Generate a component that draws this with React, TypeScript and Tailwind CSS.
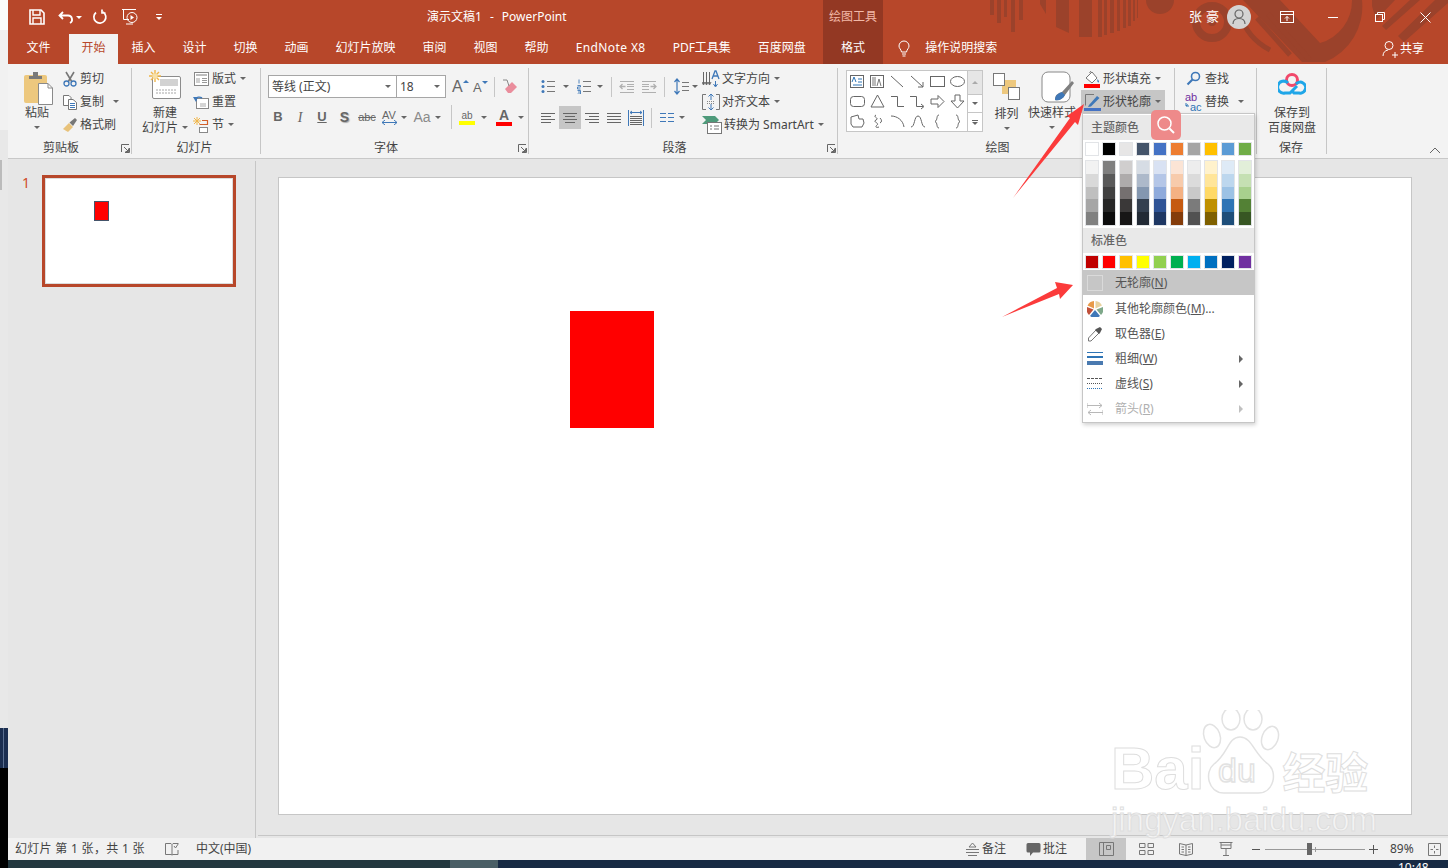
import type { ReactNode } from 'react'

const Caret = ({ className = '' }: { className?: string }) => (
  <span className={`inline-block h-0 w-0 border-x-[3px] border-t-[3px] border-x-transparent border-t-[#666] ${className}`} />
)

const Ico = ({ w = 16, h = 16, children, className = '' }: { w?: number; h?: number; children: ReactNode; className?: string }) => (
  <svg width={w} height={h} viewBox={`0 0 ${w} ${h}`} fill="none" className={`shrink-0 ${className}`}>
    {children}
  </svg>
)

const Launcher = () => (
  <svg width="9" height="9" viewBox="0 0 9 9" fill="none" className="absolute right-[2px] top-[6px]">
    <path d="M0.5 8V0.5H8M8.5 4V8.5H4M3 3L7.500 7.500M7.500 4.500V7.500H4.500" stroke="#666" strokeWidth="1" />
  </svg>
)

function Group({ label, className, labelPad = '', launcher, children }: { label: string; className: string; labelPad?: string; launcher?: boolean; children: ReactNode }) {
  return (
    <div className={`relative flex h-[92px] shrink-0 flex-col pt-[3px] ${className}`}>
      <div className="flex h-[71px]">{children}</div>
      <div className={`relative h-[18px] text-center leading-[19px] ${labelPad}`}>
        {label}
        {launcher && <Launcher />}
      </div>
      <div className="absolute right-0 top-[4px] h-[86px] w-px bg-[#c6c6c6]" />
    </div>
  )
}

function SmallRow({ icon, label, caret, caretGap = 'ml-[4px]', className = '' }: { icon: ReactNode; label: string; caret?: boolean; caretGap?: string; className?: string }) {
  return (
    <div className={`flex h-[23px] items-center whitespace-nowrap ${className}`}>
      {icon}
      <span>{label}</span>
      {caret && <Caret className={caretGap} />}
    </div>
  )
}

const Sep = ({ className = '' }: { className?: string }) => <div className={`w-px shrink-0 bg-[#c6c6c6] ${className}`} />

/* ---------- ribbon icons ---------- */
const PasteIcon = () => (
  <Ico w={30} h={34}>
    <rect x="0" y="4" width="23" height="28" rx="2" fill="#edc87e" />
    <path d="M5 5H18V8H5ZM9 1H14V5H9Z" fill="#7a7a7a" />
    <path d="M14.500 12.500H24L28.500 17V33.500H14.500Z" fill="#fff" stroke="#8a8a8a" />
    <path d="M24 12.500V17H28.500" stroke="#8a8a8a" />
  </Ico>
)
const ScissorsIcon = () => (
  <Ico>
    <path d="M4 1L10 11M12 1L6 11" stroke="#777" strokeWidth="1.600" />
    <circle cx="4.500" cy="12.500" r="2.500" stroke="#3f78b8" strokeWidth="1.300" />
    <circle cx="11.500" cy="12.500" r="2.500" stroke="#3f78b8" strokeWidth="1.300" />
  </Ico>
)
const CopyIcon = () => (
  <Ico>
    <path d="M1.500 1.500H7L9 3.500V11.500H1.500Z" fill="#fff" stroke="#777" />
    <path d="M6.500 5.500H11L14.500 8.500V15.500H6.500Z" fill="#fff" stroke="#777" />
    <path d="M8 9.500H13M8 11.500H13M8 13.500H13" stroke="#3f78b8" />
  </Ico>
)
const BrushIcon = () => (
  <Ico>
    <path d="M1 12L7 6L11 10L6 15Z" fill="#e8c27a" />
    <path d="M7.500 5.500L13 1L15 3L11 9Z" fill="#777" />
  </Ico>
)
const NewSlideIcon = () => (
  <Ico w={32} h={30}>
    <rect x="3.500" y="6.500" width="28" height="22" rx="1.500" fill="#fff" stroke="#8c8c8c" />
    <rect x="11" y="9" width="18" height="7" fill="#d2d2d2" />
    <path d="M7 20H27M7 23H27" stroke="#a6a6a6" strokeDasharray="2 1" />
    <path d="M6 0V12M0 6H12M2 2L10 10M10 2L2 10" stroke="#f0b64a" strokeWidth="1.400" />
    <circle cx="6" cy="6" r="2.600" fill="#f7e0a8" />
  </Ico>
)
const LayoutIcon = () => (
  <Ico>
    <rect x="1.500" y="1.500" width="14" height="13" fill="#fff" stroke="#888" />
    <rect x="3" y="3" width="11" height="2" fill="#bdbdbd" />
    <path d="M3 7H7V12H3Z" fill="#d0d0d0" />
    <path d="M9 7.500H14M9 9.500H14M9 11.500H14" stroke="#999" />
  </Ico>
)
const ResetIcon = () => (
  <Ico>
    <rect x="3.500" y="4.500" width="12" height="10" fill="#fff" stroke="#888" />
    <path d="M7 10H13M7 12H13" stroke="#aaa" />
    <path d="M2 5A5 4 0 0 1 9 4" stroke="#3f78b8" strokeWidth="1.600" />
    <path d="M0 3L3 8L5 3Z" fill="#3f78b8" />
  </Ico>
)
const SectionIcon = () => (
  <Ico>
    <path d="M4 0V8M0 4H8M1 1L7 7M7 1L1 7" stroke="#f0b64a" />
    <path d="M9 3.500H14.500V7.500H6.500" stroke="#d2602a" strokeWidth="1.200" />
    <rect x="6.500" y="10.500" width="8" height="5" fill="#fff" stroke="#888" />
  </Ico>
)
const Lines = ({ x = 5, w = 9, ys, stroke = '#777' }: { x?: number; w?: number; ys: number[]; stroke?: string }) => (
  <>
    {ys.map((y) => (
      <path key={y} d={`M${x} ${y + 0.5}H${x + w}`} stroke={stroke} />
    ))}
  </>
)
const BulletsIcon = () => (
  <Ico w={15} h={15}>
    <circle cx="2" cy="2.500" r="1.500" fill="#3f78b8" />
    <circle cx="2" cy="7.500" r="1.500" fill="#3f78b8" />
    <circle cx="2" cy="12.500" r="1.500" fill="#3f78b8" />
    <Lines x={6} w={8} ys={[2, 7, 12]} />
  </Ico>
)
const NumbersIcon = () => (
  <Ico w={15} h={15}>
    <path d="M2 .5V4.500M.5 6.500H3.500V8H.5V10H3.500M.5 11.500H3.500V15H.5M1 13H3" stroke="#3f78b8" strokeWidth=".9" />
    <Lines x={6} w={8} ys={[2, 7, 12]} />
  </Ico>
)
const IndentIcon = ({ flip }: { flip?: boolean }) => (
  <Ico w={16} h={14} className={flip ? '-scale-x-100' : ''}>
    <Lines x={1} w={14} ys={[1, 12]} stroke="#b0b0b0" />
    <Lines x={8} w={7} ys={[4, 6, 9]} stroke="#b0b0b0" />
    <path d="M6.500 6.500H1.500M3.500 4L1 6.500L3.500 9" stroke="#b0b0b0" strokeWidth="1.300" />
  </Ico>
)
const SpacingIcon = () => (
  <Ico w={15} h={17}>
    <path d="M3 1V16M.5 4L3 1L5.500 4M.5 13L3 16L5.500 13" stroke="#3f78b8" strokeWidth="1.200" />
    <Lines x={8} w={7} ys={[4, 8, 12]} />
  </Ico>
)
const AlignIcon = ({ mode }: { mode: 'l' | 'c' | 'r' | 'j' }) => {
  const rows = [2, 5, 8, 11]
  const short = mode === 'j' ? 14 : 10
  return (
    <Ico w={14} h={14}>
      {rows.map((y, i) => {
        const w = i % 2 ? short : 14
        const x = mode === 'c' ? (14 - w) / 2 : mode === 'r' ? 14 - w : 0
        return <path key={y} d={`M${x} ${y + 0.5}H${x + w}`} stroke="#666" />
      })}
    </Ico>
  )
}
const DistributeIcon = () => (
  <Ico w={16} h={16}>
    <path d="M.5 0V16M15.500 0V16" stroke="#3f78b8" />
    <path d="M2 2.500H14M4 1L2 2.500L4 4M12 1L14 2.500L12 4" stroke="#3f78b8" />
    <Lines x={2} w={12} ys={[6, 8, 10, 12, 14]} stroke="#666" />
  </Ico>
)
const ColumnsIcon = () => (
  <Ico w={14} h={12}>
    <Lines x={0} w={6} ys={[1, 5, 9]} stroke="#3f78b8" />
    <Lines x={8} w={6} ys={[1, 5, 9]} stroke="#3f78b8" />
  </Ico>
)
const TextDirIcon = () => (
  <Ico w={18} h={18}>
    <path d="M1.500 2V14M4.500 2V14M7.500 2V14" stroke="#666" />
    <path d="M0 12L1.500 15L3 12M3 12L4.500 15L6 12M6 12L7.500 15L9 12" stroke="#666" />
    <path d="M10 9L13 1H14L17 9M11.500 6H15.500" stroke="#3f78b8" strokeWidth="1.300" />
    <path d="M13.500 11V16M11.500 14L13.500 17L15.500 14" stroke="#3f78b8" />
  </Ico>
)
const AlignTextIcon = () => (
  <Ico w={18} h={18}>
    <path d="M4 1.500H.5V16.500H4M14 1.500H17.500V16.500H14" stroke="#777" />
    <path d="M9 1V7M6.500 3.500L9 1L11.500 3.500M9 11V17M6.500 14.500L9 17L11.500 14.500" stroke="#3f78b8" />
    <path d="M5 8.500H13M5 10.500H13" stroke="#888" strokeDasharray="1 1" />
  </Ico>
)
const SmartArtIcon = () => (
  <Ico w={20} h={18}>
    <path d="M0 0H13L17 4L13 8H0L4 4Z" fill="#4e9a7a" />
    <rect x="5.500" y="6.500" width="14" height="11" fill="#fff" stroke="#777" />
    <path d="M8 10H10M12 10H17M8 13H10M12 13H17" stroke="#777" />
  </Ico>
)
const FillIcon = () => (
  <Ico w={17} h={18}>
    <path d="M2 8L8 2L13 8L8 13Z" fill="#fff" stroke="#777" />
    <path d="M7 1L5.500 3" stroke="#777" />
    <path d="M13.500 9C15 11 15.500 12 14.500 12.500C13.500 12.500 13 11 13.500 9Z" fill="#3f78b8" />
    <rect x="0" y="14" width="16" height="4" fill="#ff0000" />
  </Ico>
)
const OutlineIcon = () => (
  <Ico w={17} h={18}>
    <path d="M10 1.500H1.500V12.500" stroke="#777" />
    <path d="M5 12L13 3L15.500 5L7 13.500L4 14Z" fill="#3f78b8" />
    <rect x="0" y="15" width="17" height="3" fill="#4472c4" />
  </Ico>
)
const FindIcon = () => (
  <Ico w={15} h={15}>
    <circle cx="9.500" cy="5.500" r="4" stroke="#3f78b8" strokeWidth="1.600" />
    <path d="M6.500 8.500L1.500 13.500" stroke="#3f78b8" strokeWidth="2.200" />
  </Ico>
)
const ReplaceIcon = () => (
  <svg width="18" height="21" viewBox="0 0 18 21" className="shrink-0">
    <text x="0" y="9.500" fontSize="11" fill="#7030a0" fontFamily="Liberation Sans">ab</text>
    <text x="5" y="19.500" fontSize="11" fill="#2e74b5" fontFamily="Liberation Sans">ac</text>
    <path d="M1 12V15H4M3 13.500L1 15" stroke="#2e74b5" fill="none" />
  </svg>
)
const BaiduCloud = () => (
  <Ico w={28} h={24}>
    <circle cx="14" cy="8" r="5.500" stroke="#f1486a" strokeWidth="3" />
    <path d="M10 11A6 6 0 1 0 7 21H12L19 14" stroke="#1fa6e8" strokeWidth="3" />
    <path d="M14 19L16 21H21A5.500 5.500 0 1 0 18 12" stroke="#1fa6e8" strokeWidth="3" />
  </Ico>
)

const shapeStroke = '#666'
const shapes: ReactNode[] = [
  <>
    <rect x=".5" y="2.500" width="13" height="12" stroke={shapeStroke} />
    <path d="M2 9L4 4L6 9M8 6H12M8 9H12M3 12H12" stroke="#2e74b5" />
  </>,
  <>
    <rect x=".5" y="2.500" width="13" height="12" stroke={shapeStroke} />
    <path d="M3 4V13M5 4V13M7 13L9 6L11 13" stroke="#777" />
  </>,
  <path d="M1 3L13 14" stroke={shapeStroke} />,
  <path d="M1 3L13 14M13 9V14H8" stroke={shapeStroke} />,
  <rect x=".5" y="3.500" width="14" height="10" stroke={shapeStroke} />,
  <ellipse cx="7.500" cy="8.500" rx="7" ry="5" stroke={shapeStroke} />,
  <rect x=".5" y="3.500" width="14" height="10" rx="3" stroke={shapeStroke} />,
  <path d="M7.500 2L14 14H1Z" stroke={shapeStroke} />,
  <path d="M1 3.500H7.500V13.500H14" stroke={shapeStroke} />,
  <path d="M0 3.500H6.500V13.500H13M11 11L14 13.500L11 16" stroke={shapeStroke} />,
  <path d="M1 6H8V2.500L14 8.500L8 14.500V11H1Z" stroke={shapeStroke} />,
  <path d="M5 2H10V8H14L7.500 15L1 8H5Z" stroke={shapeStroke} />,
  <path d="M1 4L8 2L9 6H13L14 10L12 14H3L1 11Z" stroke={shapeStroke} />,
  <path d="M6 2C2 4 10 5 6 7C2 9 10 10 7 12C5 14 6 15 9 14M10 5C12 7 12 9 10 10" stroke={shapeStroke} />,
  <path d="M1 3C7 3 13 7 14 14" stroke={shapeStroke} />,
  <path d="M1 14C5 14 4 3 8 3C12 3 11 14 15 14" stroke={shapeStroke} />,
  <path d="M9 2C6 2 8 7 5 8.500C8 10 6 15 9 15" stroke={shapeStroke} />,
  <path d="M6 2C9 2 7 7 10 8.500C7 10 9 15 6 15" stroke={shapeStroke} />,
]

/* ---------- colour menu data ---------- */
const themeTop = ['bg-[#ffffff]', 'bg-[#000000]', 'bg-[#e7e6e6]', 'bg-[#44546a]', 'bg-[#4472c4]', 'bg-[#ed7d31]', 'bg-[#a5a5a5]', 'bg-[#ffc000]', 'bg-[#5b9bd5]', 'bg-[#70ad47]']
const themeShades = [
  ['bg-[#f2f2f2]', 'bg-[#d9d9d9]', 'bg-[#bfbfbf]', 'bg-[#a6a6a6]', 'bg-[#808080]'],
  ['bg-[#7f7f7f]', 'bg-[#595959]', 'bg-[#404040]', 'bg-[#262626]', 'bg-[#0d0d0d]'],
  ['bg-[#d0cece]', 'bg-[#aeabab]', 'bg-[#757070]', 'bg-[#3a3838]', 'bg-[#171616]'],
  ['bg-[#d6dce4]', 'bg-[#adb9ca]', 'bg-[#8497b0]', 'bg-[#333f4f]', 'bg-[#222a35]'],
  ['bg-[#d9e2f3]', 'bg-[#b4c6e7]', 'bg-[#8eaadb]', 'bg-[#2f5496]', 'bg-[#1f3864]'],
  ['bg-[#fbe4d5]', 'bg-[#f7cbac]', 'bg-[#f4b183]', 'bg-[#c55a11]', 'bg-[#843c0b]'],
  ['bg-[#ededed]', 'bg-[#dbdbdb]', 'bg-[#c9c9c9]', 'bg-[#7b7b7b]', 'bg-[#525252]'],
  ['bg-[#fff2cc]', 'bg-[#ffe599]', 'bg-[#ffd966]', 'bg-[#bf9000]', 'bg-[#7f6000]'],
  ['bg-[#deeaf6]', 'bg-[#bdd7ee]', 'bg-[#9cc2e5]', 'bg-[#2e74b5]', 'bg-[#1e4e79]'],
  ['bg-[#e2efd9]', 'bg-[#c5e0b3]', 'bg-[#a8d08d]', 'bg-[#538135]', 'bg-[#375623]'],
]
const standard = ['bg-[#c00000]', 'bg-[#ff0000]', 'bg-[#ffc000]', 'bg-[#ffff00]', 'bg-[#92d050]', 'bg-[#00b050]', 'bg-[#00b0f0]', 'bg-[#0070c0]', 'bg-[#002060]', 'bg-[#7030a0]']

function SwatchRow({ colors }: { colors: string[] }) {
  return (
    <div className="flex h-[14px] gap-[3px] pl-[2px]">
      {colors.map((c) => (
        <div key={c} className={`h-[14px] w-[14px] border border-[#e2e4e7] ${c}`} />
      ))}
    </div>
  )
}

function MenuItem({ icon, label, hot, sub, disabled }: { icon: ReactNode; label: string; hot: string; sub?: boolean; disabled?: boolean }) {
  return (
    <div className={`flex h-[25px] items-center ${disabled ? 'text-[#b0b0b0]' : 'text-[#555]'}`}>
      <div className="flex w-[32px] shrink-0 justify-start pl-[4px]">{icon}</div>
      <span>
        {label}(<span className="underline">{hot}</span>){hot === 'M' ? '...' : ''}
      </span>
      {sub && (
        <span className={`ml-auto mr-[11px] h-0 w-0 border-y-[4px] border-l-[4px] border-y-transparent ${disabled ? 'border-l-[#c0c0c0]' : 'border-l-[#666]'}`} />
      )}
    </div>
  )
}

function ColorMenu() {
  return (
    <div className="absolute left-[1082px] top-[113px] z-20 h-[310px] w-[173px] border border-[#c6c6c6] bg-white py-[1px] text-[12px] shadow-[1px_2px_4px_rgba(0,0,0,0.18)]">
      <div className="flex h-[25px] items-center bg-[#e9e9e9] pl-[8px] font-medium text-[#666]">主题颜色</div>
      <div className="mt-[2px]">
        <SwatchRow colors={themeTop} />
      </div>
      <div className="mt-[4px] flex h-[66px] gap-[3px] pl-[2px]">
        {themeShades.map((col) => (
          <div key={col[0]} className="w-[14px] border border-[#e2e4e7]">
            {col.map((c) => (
              <div key={c} className={`h-[12.800px] ${c}`} />
            ))}
          </div>
        ))}
      </div>
      <div className="mt-[2px] flex h-[25px] items-center bg-[#e9e9e9] pl-[8px] font-medium text-[#666]">标准色</div>
      <div className="mt-[2px]">
        <SwatchRow colors={standard} />
      </div>
      <div className="mb-[1px] mt-[1px] flex h-[25px] items-center bg-[#c6c6c6] text-[#555]">
        <div className="ml-[4px] h-[16px] w-[16px] border border-[#dadada]" />
        <span className="ml-[12px]">
          无轮廓(<span className="underline">N</span>)
        </span>
      </div>
      <MenuItem
        label="其他轮廓颜色"
        hot="M"
        icon={
          <svg width="16" height="16" viewBox="0 0 16 16">
            <path d="M7 7.500V0A8 8 0 0 0 .5 4.500Z" fill="#e89a4a" />
            <path d="M8.500 7.500V0A8 8 0 0 1 15 4.500Z" fill="#e8d2a0" />
            <path d="M0 6L6.500 8.500L2 14A8 8 0 0 1 0 6Z" fill="#c0503a" />
            <path d="M16 6L9.500 8.500L14 14A8 8 0 0 0 16 6Z" fill="#7ea88a" />
            <path d="M8 9L13 15A8 8 0 0 1 3 15Z" fill="#3f78b8" />
          </svg>
        }
      />
      <MenuItem
        label="取色器"
        hot="E"
        icon={
          <Ico>
            <path d="M9 4L12 7L4 15L1.500 15L1.500 12Z" fill="#fff" stroke="#777" />
            <path d="M9 3L13 1L15 3L13 7L12 8L8 4Z" fill="#555" />
          </Ico>
        }
      />
      <MenuItem
        label="粗细"
        hot="W"
        sub
        icon={
          <Ico h={14}>
            <rect y="0" width="16" height="1" fill="#2e74b5" />
            <rect y="4" width="16" height="2" fill="#2e74b5" />
            <rect y="9" width="16" height="4" fill="#4a7ab0" />
          </Ico>
        }
      />
      <MenuItem
        label="虚线"
        hot="S"
        sub
        icon={
          <Ico h={12}>
            <path d="M0 .5H16" stroke="#555" strokeDasharray="3 1" />
            <path d="M0 5.500H16" stroke="#555" strokeDasharray="1 1" />
            <path d="M0 10.500H16" stroke="#2e74b5" strokeDasharray="1 1" />
          </Ico>
        }
      />
      <MenuItem
        label="箭头"
        hot="R"
        sub
        disabled
        icon={
          <Ico h={16}>
            <path d="M0 4.500H15M12 2L15 4.500L12 7M16 11.500H1M4 9L1 11.500L4 14M0 2V7M16 9V14" stroke="#b8b8b8" />
          </Ico>
        }
      />
    </div>
  )
}

function TitleBar() {
  return (
    <div className="relative z-[1] flex h-[34px] items-center text-[12px] text-white">
      <div className="flex w-[419px] items-center pl-[21px]">
        <Ico className="mr-[14px]">
          <path d="M1 1H12L15 4V15H1Z" stroke="#fff" strokeWidth="1.600" />
          <path d="M4 1V6H11V1M4 15V9H12V15" stroke="#fff" strokeWidth="1.400" />
        </Ico>
        <Ico className="mr-[2px] -ml-[1px]">
          <path d="M5 3L1.500 6.500L5 10M2 6.500H10A4 4 0 0 1 12 14" stroke="#fff" strokeWidth="1.800" />
        </Ico>
        <Caret className="mr-[10px] border-t-white" />
        <Ico className="mr-[13px]">
          <path d="M4 3.500A6 6 0 1 0 11 3M10 .5V4H13.500" stroke="#fff" strokeWidth="1.700" />
        </Ico>
        <Ico w={18} h={18} className="mr-[17px]">
          <path d="M1 1.500H15M2.500 2V11.500H8" stroke="#fff" />
          <circle cx="11" cy="9.500" r="5" stroke="#fff" />
          <path d="M9.500 7V12L13 9.500Z" fill="#fff" />
          <path d="M5 16H12" stroke="#fff" />
        </Ico>
        <div className="flex flex-col items-center gap-[2px]">
          <div className="h-px w-[6px] bg-white" />
          <Caret className="border-t-white" />
        </div>
      </div>
      <div className="w-[396px] whitespace-pre">
        演示文稿1<span className="mx-[8px]">-</span>PowerPoint
      </div>
      <div className="flex h-full w-[60px] items-center justify-center bg-[#933823] text-[#f2b9a8]">绘图工具</div>
      <div className="ml-[306px] w-[37px] text-[13px] tracking-[4px] whitespace-nowrap">张豪</div>
      <div className="ml-[1px] flex h-[24px] w-[24px] items-center justify-center rounded-full bg-[#d4d4d4]">
        <Ico w={14} h={16}>
          <circle cx="7" cy="5" r="4" stroke="#666" strokeWidth="1.200" />
          <path d="M1 15C1 11 4 9.500 7 9.500C10 9.500 13 11 13 15" stroke="#666" strokeWidth="1.200" />
        </Ico>
      </div>
      <Ico w={14} h={12} className="ml-[29px]">
        <rect x=".5" y=".5" width="13" height="11" stroke="#fff" />
        <path d="M0 3.500H14M7 10V5.500M5 7.500L7 5.500L9 7.500" stroke="#fff" />
      </Ico>
      <div className="ml-[34px] h-px w-[10px] bg-white" />
      <Ico w={10} h={10} className="ml-[37px]">
        <rect x=".5" y="2.500" width="7" height="7" stroke="#fff" />
        <path d="M2.500 2.500V.5H9.500V7.500H7.500" stroke="#fff" />
      </Ico>
      <Ico w={11} h={11} className="ml-[35px]">
        <path d="M.5 .5L10.500 10.500M10.500 .5L.5 10.500" stroke="#fff" />
      </Ico>
    </div>
  )
}

function Tabs() {
  const plain = ['插入', '设计', '切换', '动画', '幻灯片放映', '审阅', '视图', '帮助']
  return (
    <div className="relative z-[1] flex h-[30px] text-[12px] leading-[28px] text-white">
      <div className="w-[61px] text-center">文件</div>
      <div className="h-full w-[49px] bg-[#f3f3f3] text-center text-[#b7472a]">开始</div>
      {plain.map((t) => (
        <div key={t} className="px-[13.500px] whitespace-nowrap">
          {t}
        </div>
      ))}
      <div className="w-[97px] px-[13.500px] tracking-[0.4px] whitespace-nowrap">EndNote X8</div>
      <div className="w-[85px] px-[13.500px] whitespace-nowrap">PDF工具集</div>
      <div className="w-[79px] pl-[13.500px]">百度网盘</div>
      <div className="h-full w-[60px] bg-[#933823] text-center">格式</div>
      <div className="flex w-[42px] items-center justify-center">
        <Ico w={12} h={18}>
          <path d="M3.500 12C3 9 1 8.500 1 6A5 5 0 0 1 11 6C11 8.500 9 9 8.500 12ZM4 14H8M4.500 16H7.500" stroke="#fff" />
        </Ico>
      </div>
      <div className="w-[72px]">操作说明搜索</div>
      <div className="ml-auto mr-[24px] flex items-center gap-[2px]">
        <Ico w={16} h={18}>
          <circle cx="7" cy="5.500" r="4" stroke="#fff" />
          <path d="M1 16C1 12.500 3 10.500 6 10M10 15H16M13 12V18" stroke="#fff" />
        </Ico>
        <span>共享</span>
      </div>
    </div>
  )
}

function HeaderPattern() {
  return (
    <svg width="468" height="64" viewBox="0 0 468 64" className="absolute right-0 top-0" fill="#9b422b">
      <path d="M10 0H14V15H10ZM17 0H21V23H17ZM24 0H27V17H24ZM31 0H35V32H31ZM39 0H43V20H39ZM56 0H60V4L66 14V0H56ZM76 0H89V33L76 27ZM99 0H112V37H99ZM118 0H122V37H118ZM124 0H127V35H124ZM130 0H134V33H130ZM137 0H140V31H137ZM143 0H146V28H143ZM148 0H151V26H148ZM153 0H155V21H153ZM157 0H158V18H157Z" />
      <circle cx="180" cy="0" r="14" />
      <circle cx="232" cy="22" r="16" fill="none" stroke="#9b422b" strokeWidth="8" />
      <circle cx="232" cy="22" r="4" />
      <path d="M268 0H263L322 62H345A60 60 0 0 0 382 0H372A44 44 0 0 1 340 43L300 0Z" />
      <path d="M288 14L330 60M277 18L310 55M260 14A60 60 0 0 0 290 50" fill="none" stroke="#9b422b" strokeWidth="5" />
      <path d="M392 0H400L415 0L396 20L392 6ZM468 0V3L424 42L418 36L455 0ZM440 0L406 30L402 26L430 0Z" />
    </svg>
  )
}

const TextCell = ({ w, children, className = '' }: { w: string; children: ReactNode; className?: string }) => (
  <div className={`flex h-full shrink-0 items-center justify-center ${w} ${className}`}>{children}</div>
)

function Ribbon() {
  return (
    <div className="flex h-[95px] border-b border-[#c8c8c8] bg-[#f3f3f3] text-[12px] text-[#444]">
      <Group label="剪贴板" className="w-[124px]" labelPad="pr-[18px]" launcher>
        <div className="flex w-[53px] flex-col items-center pl-[5px] pt-[4px]">
          <span className="ml-[4px]"><PasteIcon /></span>
          <div className="leading-[15px]">粘贴</div>
          <div className="flex h-[15px] items-center"><Caret /></div>
        </div>
        <div className="flex flex-col">
          <SmallRow icon={<span className="ml-[1px] mr-[2px]"><ScissorsIcon /></span>} label="剪切" />
          <SmallRow icon={<span className="ml-[1px] mr-[2px]"><CopyIcon /></span>} label="复制" caret caretGap="ml-[9px]" />
          <SmallRow icon={<span className="ml-[1px] mr-[2px]"><BrushIcon /></span>} label="格式刷" />
        </div>
      </Group>
      <Group label="幻灯片" className="w-[129px]" labelPad="pr-[4px]">
        <div className="flex w-[61px] flex-col items-center pl-[5px] pt-[3px]">
          <div className="h-[31px]"><NewSlideIcon /></div>
          <div className="mt-[4px] leading-[15px]">新建</div>
          <div className="flex items-center whitespace-nowrap leading-[15px]">幻灯片<Caret className="ml-[4px]" /></div>
        </div>
        <div className="flex flex-col">
          <SmallRow icon={<span className="mr-[3px]"><LayoutIcon /></span>} label="版式" caret />
          <SmallRow icon={<span className="mr-[3px]"><ResetIcon /></span>} label="重置" />
          <SmallRow icon={<span className="mr-[3px]"><SectionIcon /></span>} label="节" caret />
        </div>
      </Group>
      <Group label="字体" className="w-[268px]" labelPad="pr-[18px]" launcher>
        <div className="flex flex-col pl-[7px] pt-[8px]">
          <div className="flex h-[23px] items-center">
            <div className="flex h-[23px] w-[129px] items-center justify-between border border-[#a6a6a6] bg-white pl-[3px] pr-[5px] whitespace-nowrap">等线 (正文)<Caret /></div>
            <div className="-ml-px flex h-[23px] w-[50px] items-center justify-between border border-[#a6a6a6] bg-white pl-[3px] pr-[5px]">18<Caret /></div>
            <div className="ml-[6px] flex w-[15px] items-start font-['Liberation_Sans',sans-serif] text-[16px] leading-none text-[#666]">A<span className="mt-[1px] h-0 w-0 border-x-[3px] border-b-[3px] border-x-transparent border-b-[#3f78b8]" /></div>
            <div className="ml-[6px] flex w-[14px] items-start font-['Liberation_Sans',sans-serif] text-[13px] leading-none text-[#666] pt-[2px]">A<span className="h-0 w-0 border-x-[3px] border-t-[3px] border-x-transparent border-t-[#3f78b8]" /></div>
            <Sep className="ml-[7px] h-[20px]" />
            <Ico w={16} h={16} className="ml-[7px]">
              <path d="M3 10L10 3L15 8L9 14H6Z" fill="#ea8d9c" />
              <path d="M1 1L5 1L7 7" stroke="#888" />
            </Ico>
          </div>
          <div className="mt-[7px] flex h-[24px] items-center font-['Liberation_Sans',sans-serif] text-[#666]">
            <TextCell w="w-[22px]" className="ml-[-1px] text-[13px] font-bold">B</TextCell>
            <TextCell w="w-[22px]" className="font-['Liberation_Serif',serif] text-[14px] italic">I</TextCell>
            <TextCell w="w-[22px]" className="text-[13px] font-bold underline">U</TextCell>
            <TextCell w="w-[23px]" className="text-[14px] font-bold [text-shadow:1px_1px_1px_#aaa]">S</TextCell>
            <TextCell w="w-[22px]" className="text-[11px] line-through">abc</TextCell>
            <div className="flex h-full w-[22px] shrink-0 flex-col items-center justify-center">
              <span className="text-[11px] leading-[10px]">AV</span>
              <svg width="15" height="5" viewBox="0 0 15 5" fill="none"><path d="M0 2.500H15M3 0L0 2.500L3 5M12 0L15 2.500L12 5" stroke="#3f78b8" /></svg>
            </div>
            <Caret className="ml-[1px]" />
            <TextCell w="w-[24px]" className="ml-[3px] text-[14px] text-[#8a8a8a]">Aa</TextCell>
            <Caret className="ml-[1px]" />
            <Sep className="ml-[10px] h-[24px]" />
            <div className="ml-[7px] flex w-[16px] flex-col items-center">
              <span className="text-[10px] leading-[11px]">ab</span>
              <div className="h-[4px] w-[16px] bg-[#ffff00]" />
            </div>
            <Caret className="ml-[6px]" />
            <div className="ml-[9px] flex w-[16px] flex-col items-center">
              <span className="text-[14px] font-bold leading-[13px]">A</span>
              <div className="h-[4px] w-[16px] bg-[#ff0000]" />
            </div>
            <Caret className="ml-[6px]" />
          </div>
        </div>
      </Group>
      <Group label="段落" className="w-[309px]" labelPad="pr-[18px]" launcher>
        <div className="flex w-[173px] shrink-0 flex-col pl-[12px] pt-[8px]">
          <div className="flex h-[23px] items-center">
            <BulletsIcon />
            <Caret className="ml-[7px]" />
            <span className="ml-[8px]"><NumbersIcon /></span>
            <Caret className="ml-[5px]" />
            <Sep className="ml-[8px] h-[20px]" />
            <span className="ml-[7px]"><IndentIcon /></span>
            <span className="ml-[6px]"><IndentIcon flip /></span>
            <Sep className="ml-[7px] h-[20px]" />
            <span className="ml-[9px]"><SpacingIcon /></span>
            <Caret className="ml-[3px]" />
          </div>
          <div className="mt-[8px] flex h-[23px] items-center">
            <AlignIcon mode="l" />
            <div className="ml-[4px] flex h-[23px] w-[22px] items-center justify-center bg-[#c6c6c6]"><AlignIcon mode="c" /></div>
            <span className="ml-[4px]"><AlignIcon mode="r" /></span>
            <span className="ml-[8px]"><AlignIcon mode="j" /></span>
            <span className="ml-[7px]"><DistributeIcon /></span>
            <Sep className="ml-[7px] h-[20px]" />
            <span className="ml-[8px]"><ColumnsIcon /></span>
            <Caret className="ml-[5px]" />
          </div>
        </div>
        <div className="flex flex-col">
          <SmallRow icon={<span className="mr-[2px]"><TextDirIcon /></span>} label="文字方向" caret />
          <SmallRow icon={<span className="mr-[2px]"><AlignTextIcon /></span>} label="对齐文本" caret />
          <SmallRow icon={<span className="mr-[2px]"><SmartArtIcon /></span>} label="转换为 SmartArt" caret />
        </div>
      </Group>
      <Group label="绘图" className="w-[337px]" labelPad="pr-[18px]">
        <div className="ml-[8px] mt-[3px] flex h-[62px] w-[137px] shrink-0 border border-[#c6c6c6] bg-white">
          <div className="grid w-[121px] grid-cols-6 auto-rows-[20px]">
            {shapes.map((s, i) => (
              <div key={i} className="flex items-center justify-center">
                <Ico w={15} h={17}>{s}</Ico>
              </div>
            ))}
          </div>
          <div className="flex w-[15px] flex-col border-l border-[#c6c6c6]">
            <div className="flex h-[23px] items-center justify-center bg-[#e6e6e6]">
              <span className="h-0 w-0 border-x-[3px] border-b-[3px] border-x-transparent border-b-[#aaa]" />
            </div>
            <div className="flex h-[19px] items-center justify-center border-y border-[#c6c6c6]"><Caret /></div>
            <div className="flex flex-1 flex-col items-center justify-center gap-[1px]">
              <div className="h-px w-[6px] bg-[#666]" />
              <Caret />
            </div>
          </div>
        </div>
        <div className="flex w-[47px] shrink-0 flex-col items-center pt-[6px]">
          <Ico w={28} h={27}>
            <rect x="9" y="7" width="14" height="14" fill="#edc87e" />
            <rect x=".5" y=".5" width="11" height="12" fill="#fff" stroke="#777" />
            <rect x="15.500" y="14.500" width="11" height="12" fill="#fff" stroke="#777" />
          </Ico>
          <div className="mt-[6px] leading-[15px]">排列</div>
          <div className="flex h-[15px] items-center"><Caret /></div>
        </div>
        <div className="-ml-[3px] flex w-[50px] shrink-0 flex-col items-center pt-[4px]">
          <Ico w={34} h={33} className="ml-[12px]">
            <rect x="1" y="1" width="28" height="30" rx="6" fill="#fff" stroke="#888" />
            <path d="M14 29C14 23 18 22 21 21L31 10L33 12L24 24C22 28 18 30 14 29Z" fill="#7f7f7f" />
            <path d="M14 29C14 24 18 22 21 21L24 24C22 28 18 30 14 29Z" fill="#3f78b8" />
          </Ico>
          <div className="mt-[1px] whitespace-nowrap leading-[15px]">快速样式</div>
          <div className="flex h-[15px] items-center"><Caret /></div>
        </div>
        <div className="ml-[4px] flex flex-col">
          <SmallRow icon={<span className="ml-[3px] mr-[2px]"><FillIcon /></span>} label="形状填充" caret />
          <SmallRow className="w-[84px] bg-[#c6c6c6]" icon={<span className="ml-[3px] mr-[2px]"><OutlineIcon /></span>} label="形状轮廓" caret />
        </div>
      </Group>
      <Group label="" className="w-[82px]">
        <div className="flex flex-col pl-[11px]">
          <SmallRow icon={<span className="mr-[4px]"><FindIcon /></span>} label="查找" />
          <SmallRow icon={<span className="-ml-[1px] mr-[2px]"><ReplaceIcon /></span>} label="替换" caret caretGap="ml-[9px]" />
        </div>
      </Group>
      <Group label="保存" className="w-[70px]" labelPad="pr-[2px]">
        <div className="flex w-full flex-col items-center pt-[5px]">
          <BaiduCloud />
          <div className="mt-[9px] leading-[15px]">保存到</div>
          <div className="leading-[15px]">百度网盘</div>
        </div>
      </Group>
      <svg width="12" height="7" viewBox="0 0 12 7" fill="none" className="ml-[102px] mt-[83px]">
        <path d="M1 6L6 1L11 6" stroke="#666" />
      </svg>
    </div>
  )
}

function Watermark() {
  const txt = "font-['Liberation_Sans',sans-serif] text-white/60 [-webkit-text-stroke:1px_#dedede]"
  return (
    <div className="pointer-events-none absolute left-[1111px] top-[712px] z-10 flex w-[270px] flex-col">
      <div className="flex h-[84px] items-end">
        <span className={`text-[60px] font-bold leading-[55px] ${txt}`}>Bai</span>
        <svg width="80" height="86" viewBox="0 0 80 86" fill="none" stroke="#e2e2e2" strokeWidth="1.500" className="-ml-[2px]">
          <ellipse cx="10" cy="26" rx="8" ry="12" transform="rotate(-20 10 26)" />
          <ellipse cx="29" cy="9" rx="9" ry="11" />
          <ellipse cx="51" cy="9" rx="9" ry="11" />
          <ellipse cx="68" cy="28" rx="8" ry="12" transform="rotate(20 68 28)" />
          <path d="M38 27C26 27 26 44 12 54C2 62 6 83 22 83H56C72 83 76 62 66 54C52 44 50 27 38 27Z" fill="#fff" fillOpacity=".5" />
          <text x="16" y="72" fontSize="34" fontFamily="Liberation Sans" stroke="#e2e2e2" fill="#fff">du</text>
        </svg>
        <span className={`text-[43px] font-bold leading-[52px] font-['Noto_Sans_CJK_SC',sans-serif] ${txt}`}>经验</span>
      </div>
      <div className={`mt-[6px] text-[33px] leading-[36px] whitespace-nowrap ${txt}`}>jingyan.baidu.com</div>
    </div>
  )
}

export default function App() {
  return (
    <div className="relative flex h-[868px] w-[1448px] flex-col overflow-hidden bg-black font-['Noto_Sans','Noto_Sans_CJK_SC',sans-serif]">
      <div className="flex h-[860px]">
        <div className="flex w-[8px] flex-col">
          <div className="h-[30px] bg-[#fbfbfb]" />
          <div className="h-[100px] bg-[#f1f1f1]" />
          <div className="h-[30px] bg-[#e8e8e8]" />
          <div className="h-[30px] bg-[#e8e8e8]"><div className="h-full w-[2px] bg-[#bbbbbb]" /></div>
          <div className="h-[538px] bg-[#e8e8e8]" />
          <div className="h-[40px] bg-[#1b2e50]"><div className="ml-[3px] h-full w-px bg-[#5a6f90]" /></div>
          <div className="flex-1 bg-black" />
        </div>
        <div className="flex min-w-0 flex-1 flex-col bg-[#e6e6e6]">
          <div className="relative h-[64px] bg-[#b7472a]">
            <HeaderPattern />
            <TitleBar />
            <Tabs />
          </div>
          <Ribbon />
          <div className="flex min-h-0 flex-1">
            <div className="mt-[2px] w-[248px] shrink-0 border-r border-[#c6c6c6] pl-[14px] pt-[14px]">
              <div className="flex">
                <div className="w-[20px] text-[14px] leading-[16px] text-[#d04a2a]">1</div>
                <div className="relative h-[112px] w-[194px] border-[3px] border-[#b7472a] bg-white outline outline-1 -outline-offset-4 outline-[#dcdcdc]">
                  <div className="absolute left-[49px] top-[23px] h-[20px] w-[15px] border border-[#44546a] bg-[#ff0000]" />
                </div>
              </div>
            </div>
            <div className="flex min-w-0 flex-1 flex-col">
              <div className="flex-1 pl-[22px] pt-[18px]">
                <div className="relative h-[638px] w-[1134px] border border-[#c6c6c6] bg-white">
                  <div className="absolute left-[291px] top-[133px] h-[117px] w-[84px] bg-[#ff0000]" />
                </div>
              </div>
              <div className="mb-[2px] ml-[2px] h-px bg-[#c6c6c6]" />
            </div>
          </div>
          <div className="flex h-[22px] items-center bg-[#f1f1f1] text-[12px] text-[#444]">
            <div className="w-[150px] pl-[7px] tracking-[0.3px] whitespace-pre">幻灯片 第 1 张，共 1 张</div>
            <Ico w={14} h={14} className="ml-[7px]">
              <path d="M.5 1.500H6L7 2.500V13L6 12.500H.5ZM7 2.500L8 1.500H13M13 8V12.500H8L7 13M9 4L10.500 6L13.500 1.500" stroke="#777" />
            </Ico>
            <div className="ml-[17px] whitespace-nowrap">中文(中国)</div>
            <div className="flex-1" />
            <Ico w={13} h={14} className="mr-[3px]">
              <path d="M0 7.500H13M0 10.500H13M2 13.500H11M6.500 1L3 5H10Z" stroke="#777" />
            </Ico>
            <span className="w-[24px] whitespace-nowrap">备注</span>
            <Ico w={15} h={15} className="ml-[20px] mr-[2px]">
              <path d="M2 1H13A1.500 1.500 0 0 1 14.500 2.500V9A1.500 1.500 0 0 1 13 10.500H7L4 14V10.500H2A1.500 1.500 0 0 1 .5 9V2.500A1.500 1.500 0 0 1 2 1Z" fill="#666" />
            </Ico>
            <span className="w-[24px] whitespace-nowrap">批注</span>
            <div className="ml-[19px] flex h-full w-[40px] items-center justify-center bg-[#c6c6c6]">
              <Ico w={15} h={14}>
                <path d="M.5 .5H14.500V13.500H.5ZM4.500 .5V13.500M7.500 3.500H11.500V7.500H7.500Z" stroke="#777" />
              </Ico>
            </div>
            <div className="flex w-[40px] justify-center">
              <Ico w={15} h={14}>
                <path d="M.5 1.500H6V5.500H.5ZM9 1.500H14.500V5.500H9ZM.5 8.500H6V12.500H.5ZM9 8.500H14.500V12.500H9Z" stroke="#777" />
              </Ico>
            </div>
            <div className="flex w-[40px] justify-center">
              <Ico w={14} h={14}>
                <path d="M.5 1.500L7 3L13.500 1.500V12L7 13.500L.5 12ZM7 3V13.500M2.500 5H5M2.500 7.500H5M2.500 10H5M9 5H11.500M9 7.500H11.500M9 10H11.500" stroke="#777" />
              </Ico>
            </div>
            <div className="flex w-[40px] justify-center">
              <Ico w={14} h={14}>
                <path d="M.5 .5H13.500M2 .5V6.500H12V.5M7 6.500V13M4 13.500H10M2 3H12" stroke="#777" />
              </Ico>
            </div>
            <div className="ml-[6px] h-px w-[8px] bg-[#555]" />
            <div className="relative ml-[5px] h-px w-[100px] bg-[#999]">
              <div className="absolute left-[42px] top-[-6px] h-[12px] w-[5px] bg-[#666]" />
              <div className="absolute left-[50px] top-[-2px] h-[5px] w-px bg-[#999]" />
            </div>
            <Ico w={9} h={9} className="ml-[4px]">
              <path d="M0 4.500H9M4.500 0V9" stroke="#555" />
            </Ico>
            <span className="ml-[12px] w-[28px] whitespace-nowrap">89%</span>
            <Ico w={13} h={13} className="ml-[10px] mr-[7px]">
              <path d="M.5 .5H12.500V12.500H.5ZM6.500 2.500V5M6.500 8V10.500M2.500 6.500H5M8 6.500H10.500" stroke="#777" />
            </Ico>
          </div>
        </div>
      </div>
      <div className="flex h-[8px] overflow-hidden">
        <div className="h-full w-[8px] bg-black" />
        <div className="h-full w-[442px] bg-[#23383f]" />
        <div className="h-full w-[48px] bg-[#4a5f66]" />
        <div className="h-full flex-1 bg-[#172a44] pl-[900px] text-[12px] leading-[16px] text-white">10:48</div>
      </div>

      <ColorMenu />
      <div className="absolute left-[1151px] top-[110px] z-30 flex h-[30px] w-[30px] items-center justify-center rounded-[5px] bg-[#ee8a8a]">
        <Ico w={20} h={20}>
          <circle cx="8.500" cy="8.500" r="6.500" stroke="#fff" strokeWidth="1.500" />
          <path d="M13.500 13.500L18 18" stroke="#fff" strokeWidth="2" />
        </Ico>
      </div>
      <svg width="1448" height="868" viewBox="0 0 1448 868" className="pointer-events-none absolute left-0 top-0 z-30" fill="#fb3b3b">
        <path d="M1013 198L1070 118L1067 116L1084 104L1078 125L1075 122Z" />
        <path d="M1002 317L1057 288L1055 282L1073 285L1060 299L1059 294Z" />
      </svg>
      <Watermark />
    </div>
  )
}
